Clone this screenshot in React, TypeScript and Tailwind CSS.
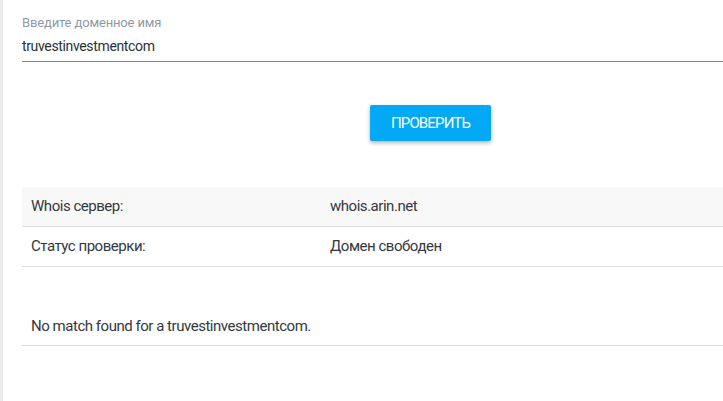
import React from "react";

export default function App() {
  const font = { fontFamily: "Roboto, 'Noto Sans', sans-serif" };
  return (
    <div className="flex min-h-[401px] w-[723px] overflow-hidden bg-white" style={font}>
      <div className="w-[3px] shrink-0 bg-[#ebebeb]" />
      <div className="flex-1 pl-[19px]">
        <div className="pt-[14px]">
          <div className="text-[13px] leading-[18px] tracking-[-0.15px] text-[#8d9aa6]">Введите доменное имя</div>
          <div className="mt-[5px] border-b border-[#7d8890] pb-[6px] text-[14px] leading-[18px] tracking-[-0.35px] text-[#263238]">
            truvestinvestmentcom
          </div>
        </div>
        <div className="mt-[43px] pl-[348px]">
          <button className="h-[36px] w-[121px] rounded-[2px] bg-[#03a9f4] text-[15px] tracking-[-0.85px] text-white uppercase shadow-[0_2px_4px_rgba(0,0,0,0.3)]">
            Проверить
          </button>
        </div>
        <div className="mt-[46px] text-[15px] tracking-[-0.47px] text-[#333840]">
          <div className="flex h-[40px] items-center border-b border-[#dddddd] bg-[#f8f8f8]">
            <div className="w-[308px] pl-[9px]">Whois сервер:</div>
            <div>whois.arin.net</div>
          </div>
          <div className="flex h-[40px] items-center border-b border-[#dddddd]">
            <div className="w-[308px] pl-[9px]">Статус проверки:</div>
            <div>Домен свободен</div>
          </div>
          <div className="border-b border-[#dddddd] pb-[10px] pl-[9px] pt-[50px] leading-[18px]">
            No match found for a truvestinvestmentcom.
          </div>
        </div>
      </div>
    </div>
  );
}
